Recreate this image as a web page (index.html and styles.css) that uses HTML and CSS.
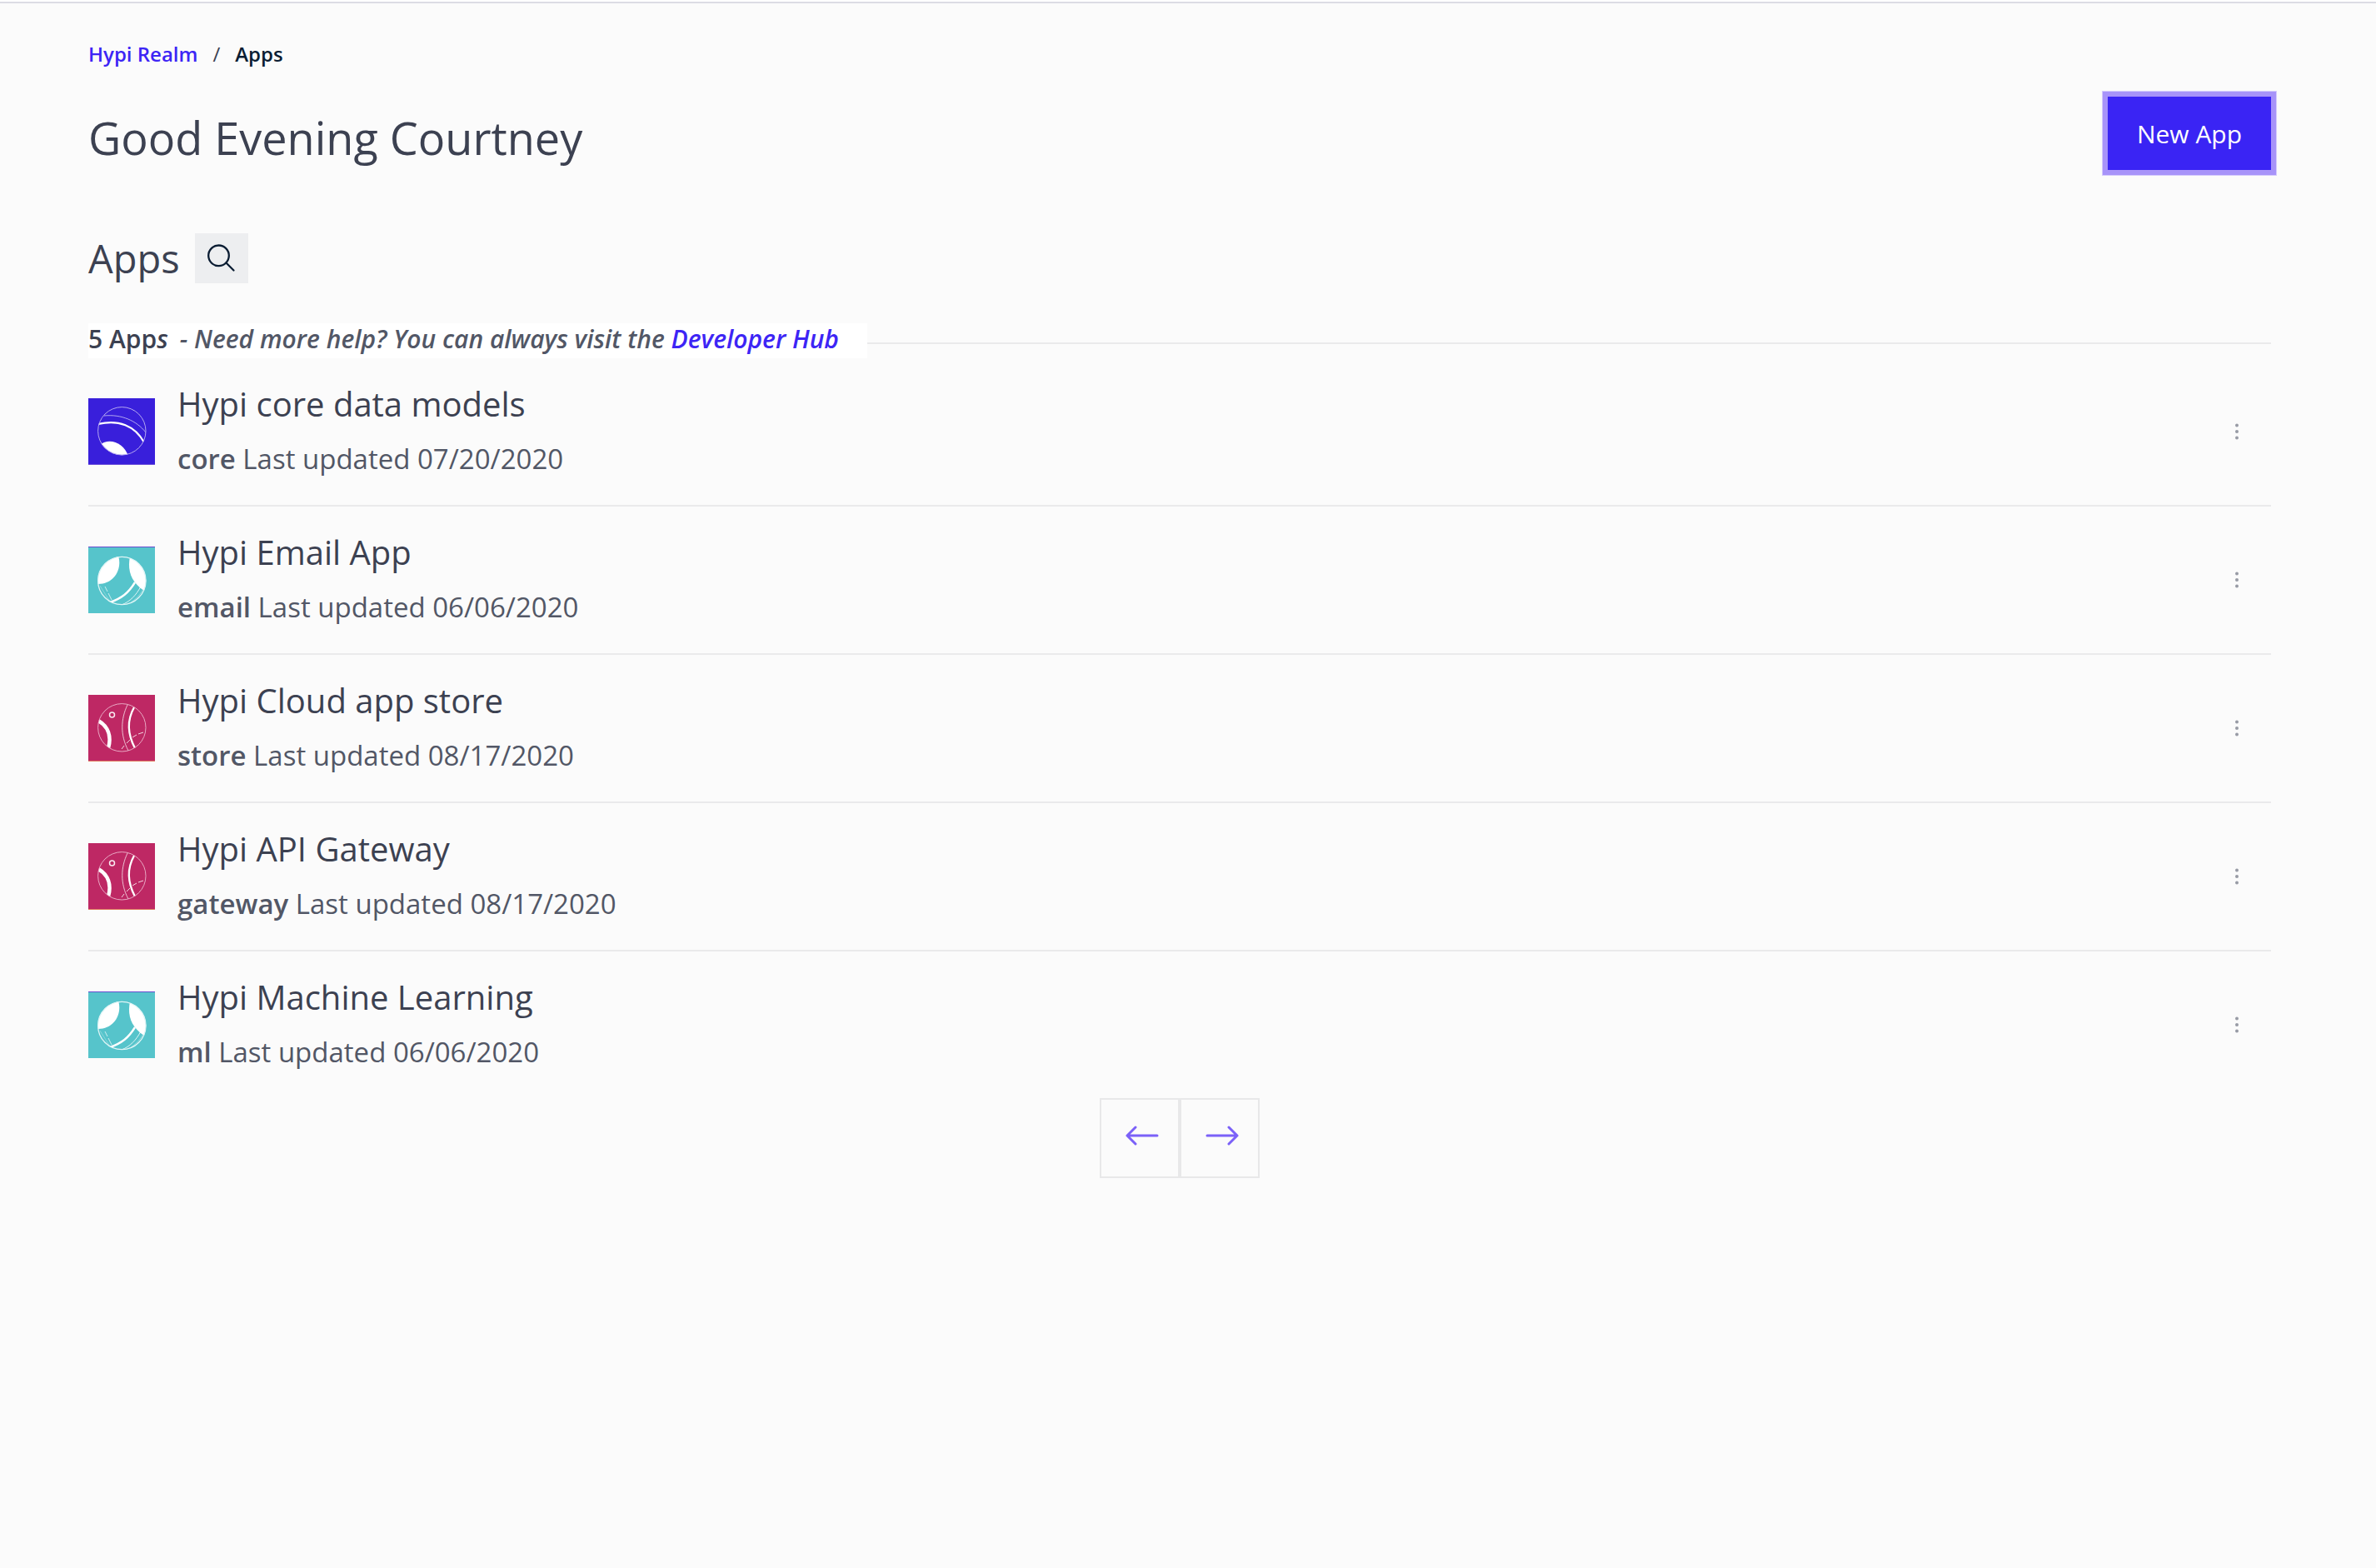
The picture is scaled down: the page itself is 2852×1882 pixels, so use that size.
FILE: index.html
```html
<!DOCTYPE html>
<html lang="en">
<head>
<meta charset="utf-8">
<meta name="viewport" content="width=device-width, initial-scale=1">
<title>Hypi Realm – Apps</title>
<link rel="stylesheet" href="styles.css">
</head>
<body>
<svg class="sprite" aria-hidden="true">
  <symbol id="planet-blue" viewBox="0 0 80 80">
    <rect width="80" height="80" fill="#391fdb"/>
    <rect y="79" width="80" height="1" fill="#6a4fd8"/>
    <clipPath id="disc-blue"><circle cx="40.300" cy="39.300" r="29"/></clipPath>
    <g clip-path="url(#disc-blue)" fill="none" stroke="#fff">
      <path d="M19 21C40 19 58 27 69 41" stroke-width="1" opacity=".6"/>
      <path d="M12 31C36 25 56 33 67 53" stroke-width="2.200"/>
      <path d="M14 56C26 46 44 55 48 70H14Z" fill="#fff" stroke="none"/>
    </g>
    <circle cx="40.300" cy="39.300" r="28.700" fill="none" stroke="#b5a8f0" stroke-width="1"/>
  </symbol>
  <symbol id="planet-teal" viewBox="0 0 80 80">
    <rect width="80" height="80" fill="#56c4cb"/>
    <rect width="80" height="1" fill="#6a4bd0"/>
    <clipPath id="disc-teal"><circle cx="40.300" cy="41" r="29"/></clipPath>
    <g clip-path="url(#disc-teal)" fill="none" stroke="#fff">
      <path d="M36 11C41 27 31 46 10 45V11Z" fill="#fff" stroke="none"/>
      <path d="M50 12C47 27 50 42 67 53L74 40V10Z" fill="#fff" stroke="none"/>
      <path d="M56 43C48 56 40 62 26 67" stroke-width="2.400"/>
      <path d="M63 48C57 59 50 66 40 70" stroke-width="1" opacity=".8"/>
      <path d="M66 51C61 60 54 66 46 70" stroke-width="1" opacity=".35"/>
      <path d="M20 48l3 6M24 56l4 8" stroke-width="1" opacity=".7"/>
      <path d="M14 47L26 66" stroke-width="1" opacity=".3"/>
    </g>
    <circle cx="40.300" cy="41" r="28.700" fill="none" stroke="#e0f5f6" stroke-width="1.300"/>
  </symbol>
  <symbol id="planet-pink" viewBox="0 0 80 80">
    <rect width="80" height="80" fill="#be2864"/>
    <rect y="79" width="80" height="1" fill="#e07a5c"/>
    <clipPath id="disc-pink"><circle cx="40.300" cy="39.300" r="29"/></clipPath>
    <g clip-path="url(#disc-pink)" fill="none" stroke="#fff">
      <path d="M12 31C24 38 28 50 24 64" stroke-width="4.500"/>
      <circle cx="28.500" cy="24" r="3" stroke-width="1.500" opacity=".9"/>
      <path d="M47 12C39 29 38 48 48 67" stroke-width="1" opacity=".7"/>
      <path d="M55 15C46 31 47 47 56 64" stroke-width="2.300"/>
      <path d="M66 45L60 47M58 48L53 51M50 54L46 58M43 61L40 65" stroke-width="1" opacity=".8"/>
    </g>
    <circle cx="40.300" cy="39.300" r="28.700" fill="none" stroke="#e9a9c4" stroke-width="1"/>
  </symbol>
  <symbol id="dots" viewBox="0 0 20 20">
    <circle cx="10" cy="2.500" r="2"/><circle cx="10" cy="10" r="2"/><circle cx="10" cy="17.500" r="2"/>
  </symbol>
</svg>

<main class="page">
  <nav class="breadcrumb" aria-label="Breadcrumb">
    <a href="#realm">Hypi Realm</a>
    <span class="slash">/</span>
    <span class="current" aria-current="page">Apps</span>
  </nav>

  <header class="header">
    <h1 class="greeting">Good Evening Courtney</h1>
    <button type="button" class="new-app">New App</button>
  </header>

  <div class="section-head">
    <h2 class="section-title">Apps</h2>
    <button type="button" class="search" aria-label="Search apps">
      <svg width="36" height="36" viewBox="0 0 36 36" fill="none" stroke="#0b1d33" stroke-width="2.300" stroke-linecap="round"><circle cx="14.500" cy="14.800" r="12.300"/><path d="M23.500 23.500L32.500 32.500"/></svg>
    </button>
  </div>

  <div class="summary">
    <p class="summary-text"><span class="count">5 App<i>s</i></span><em>- Need more help? You can always visit the <a href="#hub">Developer Hub</a></em></p>
  </div>

  <ul class="apps">
    <li class="app">
      <svg class="app-icon" aria-hidden="true"><use href="#planet-blue"/></svg>
      <div class="app-text"><h3 class="app-name">Hypi core data models</h3><p class="app-meta"><b>core</b> Last updated 07/20/2020</p></div>
      <button type="button" class="more" aria-label="Options for core"><svg width="20" height="20"><use href="#dots"/></svg></button>
    </li>
    <li class="app">
      <svg class="app-icon" aria-hidden="true"><use href="#planet-teal"/></svg>
      <div class="app-text"><h3 class="app-name">Hypi Email App</h3><p class="app-meta"><b>email</b> Last updated 06/06/2020</p></div>
      <button type="button" class="more" aria-label="Options for email"><svg width="20" height="20"><use href="#dots"/></svg></button>
    </li>
    <li class="app">
      <svg class="app-icon" aria-hidden="true"><use href="#planet-pink"/></svg>
      <div class="app-text"><h3 class="app-name">Hypi Cloud app store</h3><p class="app-meta"><b>store</b> Last updated 08/17/2020</p></div>
      <button type="button" class="more" aria-label="Options for store"><svg width="20" height="20"><use href="#dots"/></svg></button>
    </li>
    <li class="app">
      <svg class="app-icon" aria-hidden="true"><use href="#planet-pink"/></svg>
      <div class="app-text"><h3 class="app-name">Hypi API Gateway</h3><p class="app-meta"><b>gateway</b> Last updated 08/17/2020</p></div>
      <button type="button" class="more" aria-label="Options for gateway"><svg width="20" height="20"><use href="#dots"/></svg></button>
    </li>
    <li class="app">
      <svg class="app-icon" aria-hidden="true"><use href="#planet-teal"/></svg>
      <div class="app-text"><h3 class="app-name">Hypi Machine Learning</h3><p class="app-meta"><b>ml</b> Last updated 06/06/2020</p></div>
      <button type="button" class="more" aria-label="Options for ml"><svg width="20" height="20"><use href="#dots"/></svg></button>
    </li>
  </ul>

  <nav class="pager" aria-label="Pages">
    <button type="button" class="pager-button" aria-label="Previous page">
      <svg width="40" height="24" viewBox="0 0 40 24"><path d="M38 12H2M12 2L2 12L12 22"/></svg>
    </button>
    <button type="button" class="pager-button" aria-label="Next page">
      <svg width="40" height="24" viewBox="0 0 40 24"><path d="M2 12H38M28 2L38 12L28 22"/></svg>
    </button>
  </nav>
</main>
</body>
</html>
```
FILE: styles.css
```css
*,
*::before,
*::after {
  box-sizing: border-box;
}

body {
  margin: 0;
  border-top: 2px solid #fff;
  background: #fbfbfb;
  color: #3c4151;
  font-family: "Open Sans", sans-serif;
}

h1, h2, h3, p, ul {
  margin: 0;
  padding: 0;
  font-weight: 400;
}

a {
  color: #3d25f5;
  text-decoration: none;
}

button {
  border: 0;
  padding: 0;
  background: none;
  font: inherit;
  cursor: pointer;
}

.sprite {
  position: absolute;
  width: 0;
  height: 0;
}

.page {
  border-top: 2px solid #dcdce4;
  padding: 45px 126px 60px 106px;
}

.breadcrumb {
  display: flex;
  gap: 18px;
  font-size: 24px;
  font-weight: 600;
  line-height: 32px;
}

.slash {
  font-weight: 400;
}

.current {
  color: #0b1d33;
}

.header {
  display: flex;
  justify-content: space-between;
  margin-top: 35px;
}

.greeting {
  padding-top: 13px;
  font-size: 54px;
  line-height: 72px;
}

.new-app {
  padding: 0 30px;
  min-width: 196px;
  height: 88px;
  background: #3a24f4;
  box-shadow: 0 0 0 6px #a793f9, 0 0 0 7px #d5cbfc;
  color: #fff;
  font-size: 30px;
}

.section-head {
  display: flex;
  align-items: center;
  gap: 18px;
  margin-top: 76px;
}

.section-title {
  font-size: 47px;
  line-height: 60px;
}

.search {
  display: grid;
  place-items: center;
  width: 64px;
  height: 60px;
  background: #edeef0;
}

.summary {
  display: flex;
  align-items: flex-end;
  margin-top: 48px;
}

.summary::after {
  content: "";
  flex: 1;
  height: 2px;
  margin-bottom: 17px;
  background: #eaeaeb;
}

.summary-text {
  display: flex;
  gap: 14px;
  padding: 0 34px 4px 0;
  background: #fff;
  color: #525766;
  font-size: 30px;
  font-weight: 600;
  line-height: 38px;
}

.count {
  color: #3c4151;
}

.apps {
  list-style: none;
}

.app {
  display: flex;
  align-items: center;
  gap: 27px;
  padding: 31px 31px 31px 0;
}

.app + .app {
  border-top: 2px solid #eaeaeb;
}

.app-icon {
  width: 80px;
  height: 80px;
}

.app-text {
  display: grid;
  flex: 1;
  gap: 20px;
  padding-bottom: 2px;
}

.app-name {
  font-size: 40px;
  line-height: 48px;
}

.app-meta {
  color: #525766;
  font-size: 33px;
  line-height: 44px;
}

.app-meta b {
  font-weight: 600;
}

.more {
  display: flex;
  fill: #989ba5;
}

.pager {
  display: flex;
  justify-content: center;
}

.pager-button {
  display: grid;
  place-items: center;
  width: 96px;
  height: 96px;
  border: 2px solid #e8e8e9;
  padding: 0 0 6px 6px;
}

.pager-button svg {
  fill: none;
  stroke: #7b61f8;
  stroke-width: 3;
  stroke-linecap: round;
  stroke-linejoin: round;
}
```
